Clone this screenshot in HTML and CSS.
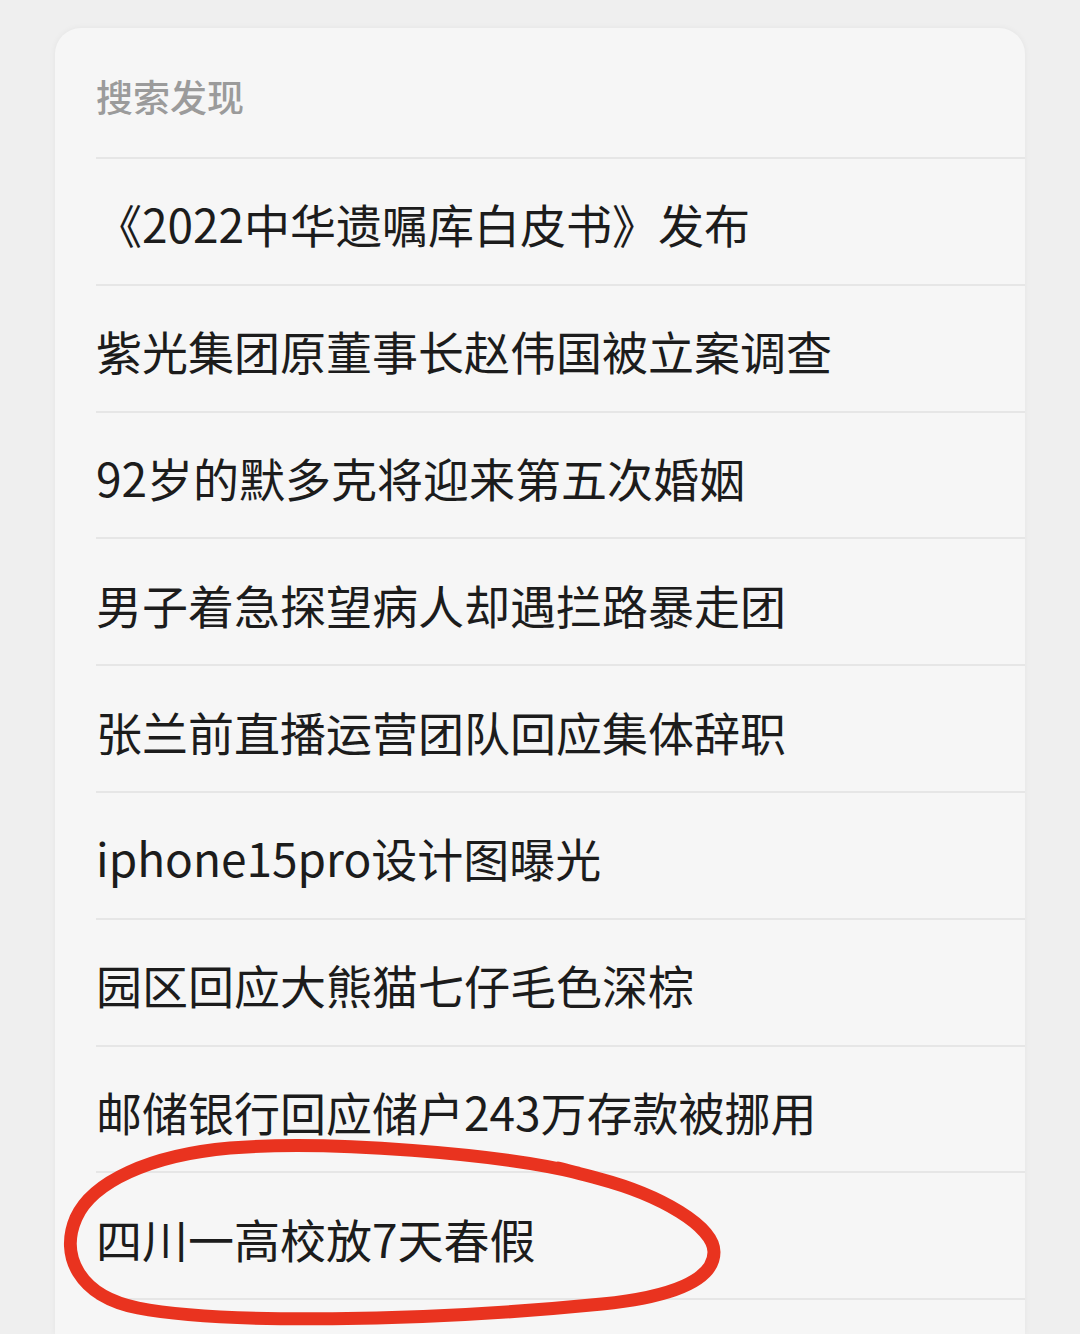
FILE: index.html
```html
<!DOCTYPE html>
<html lang="zh-CN">
<head>
    <meta charset="UTF-8">
    <meta name="viewport" content="width=device-width, initial-scale=1.0">
    <title>搜索发现</title>
    <link rel="stylesheet" href="styles.css">
</head>
<body>
    <div class="card">
        <div class="card-title">搜索发现</div>
        <ul class="topics">
            <li class="topic">《2022中华遗嘱库白皮书》发布</li>
            <li class="topic">紫光集团原董事长赵伟国被立案调查</li>
            <li class="topic">92岁的默多克将迎来第五次婚姻</li>
            <li class="topic">男子着急探望病人却遇拦路暴走团</li>
            <li class="topic">张兰前直播运营团队回应集体辞职</li>
            <li class="topic">iphone15pro设计图曝光</li>
            <li class="topic">园区回应大熊猫七仔毛色深棕</li>
            <li class="topic">邮储银行回应储户243万存款被挪用</li>
            <li class="topic">四川一高校放7天春假</li>
            <li class="topic last"></li>
        </ul>
    </div>

    <!-- hand drawn circle over the last topic -->
    <svg class="scribble" width="1080" height="1334" viewBox="0 0 1080 1334">
        <path d="M578 1173 C500 1154 330 1140 230 1148 C150 1155 92 1182 76 1218
                 C60 1255 78 1296 138 1308 C220 1324 420 1322 602 1304
                 C672 1297 714 1280 714 1252 C714 1226 660 1195 600 1179
                 C585 1175 570 1171 558 1168"
              fill="none" stroke="#e9331f" stroke-width="13" stroke-linecap="round" stroke-linejoin="round"/>
    </svg>
</body>
</html>
```

FILE: styles.css
```css
body {
    margin: 0;
    background-color: #efefef;
    font-family: "Noto Sans CJK SC", "Noto Sans", sans-serif;
    height: 1334px;
    overflow: hidden;
    position: relative;
}

.card {
    margin: 28px 0 0 55px;
    width: 970px;
    height: 1306px;
    padding-left: 41px;
    box-sizing: border-box;
    background-color: #f6f6f6;
    border-radius: 26px 26px 0 0;
    box-shadow: 0 0 6px rgba(0, 0, 0, 0.05);
    overflow: hidden;
}

.card-title {
    height: 129px;
    padding-top: 6px;
    box-sizing: border-box;
    display: flex;
    align-items: center;
    font-size: 37px;
    font-weight: 500;
    color: #9b9b9b;
}

.topics {
    list-style: none;
    margin: 0;
    padding: 0;
}

.topic {
    height: 126.8px;
    padding-top: 4px;
    box-sizing: border-box;
    border-top: 2px solid #e6e6e6;
    display: flex;
    align-items: center;
    font-size: 46px;
    color: #1c1c1c;
}

.topic.last {
    height: 40px;
}

.scribble {
    position: absolute;
    top: 0;
    left: 0;
    pointer-events: none;
}
```
